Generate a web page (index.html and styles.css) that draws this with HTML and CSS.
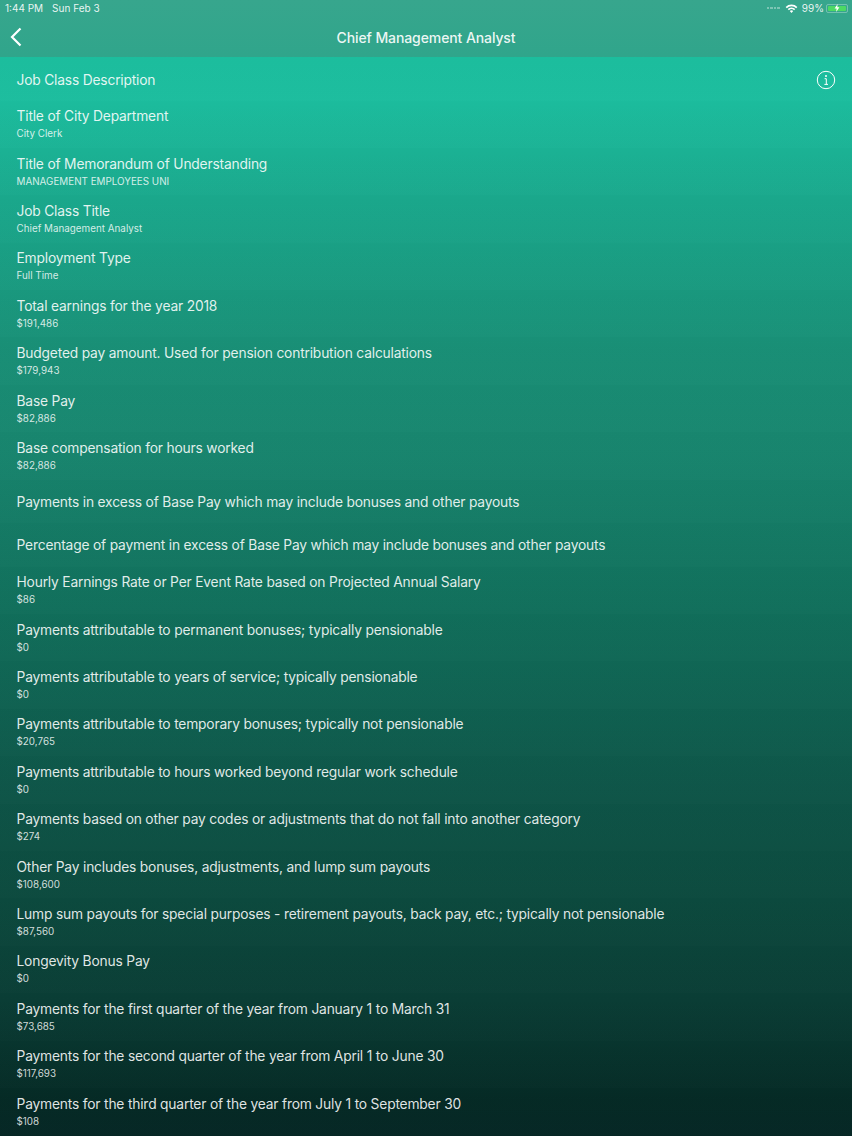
FILE: index.html

```html
<!DOCTYPE html>
<html lang="en">
<head>
    <meta charset="UTF-8">
    <meta name="viewport" content="width=device-width, initial-scale=1.0">
    <title>Chief Management Analyst</title>
    <link rel="stylesheet" href="styles.css">
</head>
<body>
    <div class="app">
        <header class="top">
            <div class="status">
                <div class="status-left"><span>1:44 PM</span><span>Sun Feb 3</span></div>
                <div class="status-right">
                    <span class="signal"><i></i><i></i><i></i><i></i></span>
                    <svg class="wifi" width="13" height="9" viewBox="0 0 14 10">
                        <path d="M0.5 3.3A9.2 9.2 0 0 1 13.5 3.3L12.2 4.7A7.3 7.3 0 0 0 1.8 4.7Z" fill="#fff"/>
                        <path d="M2.8 5.6A6 6 0 0 1 11.2 5.6L9.9 7A4.1 4.1 0 0 0 4.1 7Z" fill="#fff"/>
                        <path d="M5.1 7.9A2.8 2.8 0 0 1 8.9 7.9L7 9.9Z" fill="#fff"/>
                    </svg>
                    <span>99%</span>
                    <span class="battery"><span class="battery-fill"><svg width="6" height="8" viewBox="0 0 6 8"><path d="M3.6 0L0.6 4.5H2.6L2.2 8L5.4 3.3H3.3Z" fill="#fff"/></svg></span></span>
                </div>
            </div>
            <nav class="nav">
                <svg class="back" width="12" height="20" viewBox="0 0 12 20"><path d="M10.5 1.5L2 10L10.5 18.5" fill="none" stroke="#fff" stroke-width="2.2"/></svg>
                <h1>Chief Management Analyst</h1>
            </nav>
        </header>
        <main class="list">
            <div class="row row-short row-head">
                <span class="label">Job Class Description</span>
                <svg class="info" width="20" height="20" viewBox="0 0 20 20">
                    <circle cx="10" cy="10" r="8.7" fill="none" stroke="#fff" stroke-width="1"/>
                    <circle cx="10" cy="5.9" r="1" fill="#fff"/>
                    <path d="M8.6 8.7H10.3V14.4M8.4 14.4H12" fill="none" stroke="#fff" stroke-width="1"/>
                </svg>
            </div>
            <div class="row"><span class="label">Title of City Department</span><span class="value">City Clerk</span></div>
            <div class="row"><span class="label">Title of Memorandum of Understanding</span><span class="value">MANAGEMENT EMPLOYEES UNI</span></div>
            <div class="row"><span class="label">Job Class Title</span><span class="value">Chief Management Analyst</span></div>
            <div class="row"><span class="label">Employment Type</span><span class="value">Full Time</span></div>
            <div class="row"><span class="label">Total earnings for the year 2018</span><span class="value">$191,486</span></div>
            <div class="row"><span class="label">Budgeted pay amount. Used for pension contribution calculations</span><span class="value">$179,943</span></div>
            <div class="row"><span class="label">Base Pay</span><span class="value">$82,886</span></div>
            <div class="row"><span class="label">Base compensation for hours worked</span><span class="value">$82,886</span></div>
            <div class="row row-short"><span class="label">Payments in excess of Base Pay which may include bonuses and other payouts</span></div>
            <div class="row row-short"><span class="label">Percentage of payment in excess of Base Pay which may include bonuses and other payouts</span></div>
            <div class="row"><span class="label">Hourly Earnings Rate or Per Event Rate based on Projected Annual Salary</span><span class="value">$86</span></div>
            <div class="row"><span class="label">Payments attributable to permanent bonuses; typically pensionable</span><span class="value">$0</span></div>
            <div class="row"><span class="label">Payments attributable to years of service; typically pensionable</span><span class="value">$0</span></div>
            <div class="row"><span class="label">Payments attributable to temporary bonuses; typically not pensionable</span><span class="value">$20,765</span></div>
            <div class="row"><span class="label">Payments attributable to hours worked beyond regular work schedule</span><span class="value">$0</span></div>
            <div class="row"><span class="label">Payments based on other pay codes or adjustments that do not fall into another category</span><span class="value">$274</span></div>
            <div class="row"><span class="label">Other Pay includes bonuses, adjustments, and lump sum payouts</span><span class="value">$108,600</span></div>
            <div class="row"><span class="label">Lump sum payouts for special purposes - retirement payouts, back pay, etc.; typically not pensionable</span><span class="value">$87,560</span></div>
            <div class="row"><span class="label">Longevity Bonus Pay</span><span class="value">$0</span></div>
            <div class="row"><span class="label">Payments for the first quarter of the year from January 1 to March 31</span><span class="value">$73,685</span></div>
            <div class="row"><span class="label">Payments for the second quarter of the year from April 1 to June 30</span><span class="value">$117,693</span></div>
            <div class="row"><span class="label">Payments for the third quarter of the year from July 1 to September 30</span><span class="value">$108</span></div>
        </main>
    </div>
</body>
</html>
```

FILE: styles.css

```css
html, body {
    margin: 0;
    height: 100%;
    overflow: hidden;
}
body {
    font-family: 'Inter', 'Liberation Sans', sans-serif;
    color: #fff;
}
.app {
    width: 852px;
    height: 1136px;
    display: flex;
    flex-direction: column;
    overflow: hidden;
    background: linear-gradient(180deg, #1cc09f 0px, #1cbd9e 100px, #1aa88c 200px, #198f76 350px, #18856e 450px, #11705c 600px, #0e5548 790px, #0c4a3e 900px, #0a3d35 1000px, #052a25 1100px, #052624 1136px);
}
.top {
    height: 57px;
    flex: none;
    background: linear-gradient(180deg, #37a68d, #30a58b);
}
.status {
    height: 16px;
    display: flex;
    justify-content: space-between;
    align-items: center;
    padding: 0 4px 0 5px;
    font-size: 10px;
    color: rgba(255,255,255,0.9);
}
.status-left {
    display: flex;
    gap: 9px;
}
.status-right {
    display: flex;
    align-items: center;
    gap: 4px;
}
.signal {
    display: flex;
    gap: 1px;
    margin-right: 1px;
}
.signal i {
    width: 2.5px;
    height: 2px;
    background: rgba(255,255,255,0.35);
}
.battery {
    width: 22px;
    height: 9px;
    border: 1px solid rgba(255,255,255,0.3);
    border-radius: 2px;
    padding: 1px;
    box-sizing: border-box;
    display: flex;
    margin-left: -2px;
}
.battery-fill {
    flex: 1;
    background: #4cd964;
    border-radius: 1px;
    display: flex;
    justify-content: center;
    align-items: center;
}
.nav {
    height: 42px;
    display: flex;
    align-items: center;
    justify-content: center;
    position: relative;
}
.nav h1 {
    margin: 0;
    font-size: 14px;
    font-weight: 500;
    letter-spacing: -0.1px;
    color: rgba(255,255,255,0.92);
}
.back {
    position: absolute;
    left: 10px;
    top: 11px;
}
.list {
    flex: 1;
    overflow: hidden;
}
.row {
    height: 47.4px;
    box-sizing: border-box;
    padding: 7.7px 16.5px 0;
    display: flex;
    flex-direction: column;
    background: linear-gradient(180deg, rgba(0,0,0,0.008), rgba(255,255,255,0.008));
}
.row-short {
    height: 43.5px;
    padding-top: 2px;
    flex-direction: row;
    align-items: center;
    justify-content: space-between;
}
.row-head .label {
    margin-top: 2px;
}
.label {
    font-size: 13.8px;
    letter-spacing: -0.186px;
    line-height: 17px;
    color: rgba(255,255,255,0.88);
}
.value {
    font-size: 9.85px;
    line-height: 13px;
    margin-top: 2px;
    color: rgba(255,255,255,0.82);
}
.info {
    margin-right: -0.5px;
}
```
